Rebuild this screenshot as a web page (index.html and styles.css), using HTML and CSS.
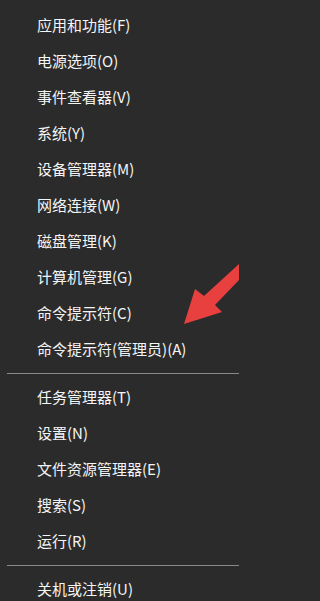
FILE: index.html
```html
<!DOCTYPE html>
<html lang="zh-CN">
<head>
<meta charset="utf-8">
<link rel="stylesheet" href="styles.css">
</head>
<body>
<div class="menu">
  <ul class="group">
    <li class="item">应用和功能(F)</li>
    <li class="item">电源选项(O)</li>
    <li class="item">事件查看器(V)</li>
    <li class="item">系统(Y)</li>
    <li class="item">设备管理器(M)</li>
    <li class="item">网络连接(W)</li>
    <li class="item">磁盘管理(K)</li>
    <li class="item">计算机管理(G)</li>
    <li class="item">命令提示符(C)</li>
    <li class="item">命令提示符(管理员)(A)</li>
  </ul>
  <hr class="sep">
  <ul class="group">
    <li class="item">任务管理器(T)</li>
    <li class="item">设置(N)</li>
    <li class="item">文件资源管理器(E)</li>
    <li class="item">搜索(S)</li>
    <li class="item">运行(R)</li>
  </ul>
  <hr class="sep">
  <ul class="group">
    <li class="item">关机或注销(U)</li>
  </ul>
  <svg class="arrow" width="239" height="601" viewBox="0 0 239 601">
    <polygon points="184,324 195,289 204,296 239,264 239,280 215,305 222,312" fill="#e8403f"/>
  </svg>
</div>
</body>
</html>
```
FILE: styles.css
```css
html, body {
  margin: 0;
  padding: 0;
  background: #2b2b2b;
}
.menu {
  position: relative;
  width: 239px;
  height: 601px;
  padding-top: 7px;
  box-sizing: border-box;
  background: #2b2b2b;
  overflow: hidden;
  font-family: "Noto Sans CJK SC", "Noto Sans", sans-serif;
  font-size: 15px;
  color: #f5f5f5;
}
.group {
  list-style: none;
  margin: 0;
  padding: 0;
}
.item {
  height: 36px;
  line-height: 36px;
  padding-left: 37px;
  white-space: nowrap;
}
.sep {
  margin: 6px 0 5px 7px;
  border: 0;
  height: 1px;
  background: #8a8a8a;
}
.arrow {
  position: absolute;
  left: 0;
  top: 0;
}
```
